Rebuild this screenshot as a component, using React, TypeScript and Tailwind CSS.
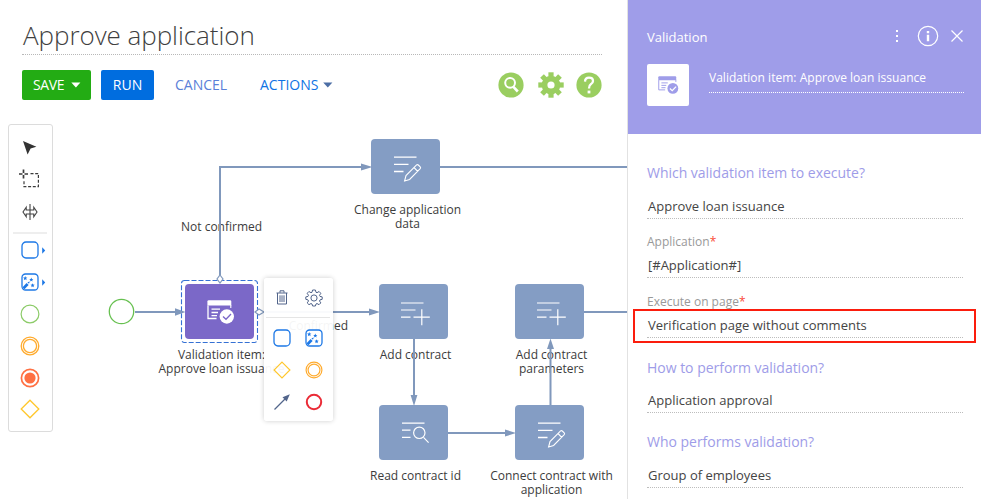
import type { ReactNode } from 'react';

const SANS = "font-['Open_Sans','Noto_Sans',sans-serif]";

function ValidationGlyph({ className }: { className: string }) {
  return (
    <svg className={className} viewBox="0 0 28 24" fill="none">
      <path d="M1 5.5V18.5H9.5" stroke="currentColor" strokeWidth="1.3" />
      <path d="M0.4 5.6V1.6Q.4 .2 1.8 .2H23Q24.3 .2 24.3 1.6V5.6Z" fill="currentColor" />
      <path d="M23.8 5V8" stroke="currentColor" strokeWidth="1.1" />
      <path d="M4.5 9.2H13M4.5 12.5H11M4.5 15.6H10" stroke="currentColor" strokeWidth="1.3" />
      <circle cx="19.8" cy="16.5" r="7.2" fill="currentColor" />
    </svg>
  );
}

function EditGlyph() {
  return (
    <svg width="28" height="26" viewBox="0 0 28 26" fill="none" stroke="#fff" strokeWidth="1.1">
      <path d="M0 1.2H22.5M0 8.4H14.5M0 15.5H9.5" strokeWidth="1.3" />
      <path d="M10.6 25L12 19.6L22.6 8.9Q23.4 8.2 24.3 9L26.2 10.9Q27 11.8 26.2 12.7L15.6 23.4L10.6 25ZM20 11.5L23.7 15.3" />
    </svg>
  );
}

function AddGlyph() {
  return (
    <svg width="29" height="24" viewBox="0 0 29 24" fill="none" stroke="#fff" strokeWidth="1.2">
      <path d="M0 1H22.5M0 8H14.5M0 15.2H9.5M12.5 15.2H28.8M20.8 7.2V23.3" />
    </svg>
  );
}

function ReadGlyph() {
  return (
    <svg width="28" height="22" viewBox="0 0 28 22" fill="none" stroke="#fff" strokeWidth="1.2">
      <path d="M0 1.2H22.5M0 8.2H8.5M0 15.3H8.5M21.5 15.4L26.6 20.6" />
      <circle cx="17.3" cy="10.8" r="5.7" />
    </svg>
  );
}

function TaskSquare() {
  return (
    <svg width="18" height="18" viewBox="0 0 18 18" fill="none" stroke="#1d78e6" strokeWidth="1.3">
      <rect x="1" y="1" width="16" height="16" rx="4" />
    </svg>
  );
}

function MagicSquare() {
  return (
    <svg width="18" height="18" viewBox="0 0 18 18" fill="#1d78e6">
      <rect x="1" y="1" width="16" height="16" rx="3.5" fill="none" stroke="#1d78e6" strokeWidth="1.3" />
      <path d="M1.8 14L5.6 9.9L7.6 11.9L3.7 16Q2 16.4 1.8 14Z" />
      <path d="M4.2 3L4.8 4.5L6.4 4.6L5.2 5.6L5.6 7.2L4.2 6.3L2.8 7.2L3.2 5.6L2 4.6L3.6 4.5Z" />
      <path d="M10.3 4.5L10.9 5.9L12.4 6L11.2 7L11.6 8.5L10.3 7.7L9 8.5L9.4 7L8.2 6L9.7 5.9Z" />
      <path d="M11.6 10.2L12.2 11.6L13.7 11.7L12.5 12.7L12.9 14.2L11.6 13.4L10.3 14.2L10.7 12.7L9.5 11.7L11 11.6Z" />
      <path d="M8.8 8.5L8 10.8L6.4 9.3Z" />
    </svg>
  );
}

function DoubleCircle({ size }: { size: number }) {
  return (
    <svg width={size} height={size} viewBox="0 0 20 20" fill="none" stroke="#ffab2e">
      <circle cx="10" cy="10" r="8.8" strokeWidth="1.3" />
      <circle cx="10" cy="10" r="6.6" strokeWidth="1.3" />
    </svg>
  );
}

function Diamond({ size }: { size: number }) {
  return (
    <svg width={size} height={size} viewBox="0 0 20 20" fill="none" stroke="#ffc72c" strokeWidth="1.3">
      <path d="M10 1.2L18.8 10L10 18.8L1.2 10Z" />
    </svg>
  );
}

function GearIcon() {
  const teeth = [0, 45, 90, 135, 180, 225, 270, 315];
  return (
    <svg width="26" height="26" viewBox="-13 -13 26 26" fill="#9ace60">
      {teeth.map((a) => (
        <rect key={a} x="-2.6" y="-12.7" width="5.2" height="7" transform={`rotate(${a})`} />
      ))}
      <path fillRule="evenodd" d="M-9.3 0A9.3 9.3 0 1 1 9.3 0A9.3 9.3 0 1 1 -9.3 0ZM-3.6 0A3.6 3.6 0 1 0 3.6 0A3.6 3.6 0 1 0 -3.6 0Z" />
    </svg>
  );
}

function Toolbar() {
  return (
    <div className="flex h-[30px] items-center text-[14px]">
      <button className="flex h-[30px] w-[69px] items-center rounded-[2px] bg-[#23ac14] pb-px pl-[11px] text-white">
        <span className="w-[38px] pb-px text-left tracking-[-0.35px]">SAVE</span>
        <svg width="10" height="6" viewBox="0 0 10 6" fill="#fff"><path d="M.3.5H9.4L4.9 5.4Z" /></svg>
      </button>
      <button className="ml-[10px] h-[30px] w-[53px] rounded-[2px] bg-[#006ddf] pb-[2px] text-white">RUN</button>
      <span className="ml-[21px] w-[85px] pb-[2px] text-[#5a80d8]">CANCEL</span>
      <span className="w-[63px] pb-[2px] text-[#0f73e4]">ACTIONS</span>
      <svg width="10" height="6" viewBox="0 0 10 6" fill="#4c6ea5"><path d="M.2.5H9.4L4.8 5.5Z" /></svg>
      <div className="ml-auto flex items-center pb-px">
        <svg width="26" height="26" viewBox="-13 -13 26 26">
          <circle r="12.6" fill="#9ace60" />
          <circle cx="-.9" cy="-2.2" r="4.9" fill="none" stroke="#fff" strokeWidth="2" />
          <path d="M2.4 1.8L6.8 6.5" stroke="#fff" strokeWidth="2.6" />
        </svg>
        <div className="mr-3 ml-[14px]"><GearIcon /></div>
        <svg width="26" height="26" viewBox="-13 -13 26 26" fill="none">
          <circle r="12.6" fill="#9ace60" />
          <path d="M-4 -3.4Q-3.8 -7.3 0 -7.3Q4 -7.3 4 -4Q4 -2 1.8 -.7Q0 .4 0 3.6" stroke="#fff" strokeWidth="2.3" />
          <rect x="-1.4" y="5.6" width="2.8" height="2.8" fill="#fff" />
        </svg>
      </div>
    </div>
  );
}

function Flyout() {
  return <svg className="absolute top-[6px] left-[33px]" width="4" height="7" viewBox="0 0 4 7" fill="#1d78e6"><path d="M.2.2L3.2 3.5L.2 6.8Z" /></svg>;
}

function Palette() {
  return (
    <div className="relative mt-[14px] ml-2 flex h-[308px] w-[45px] flex-col items-center rounded-[3px] border border-[#dcdcdc] bg-white pr-px">
      <svg className="mt-[15px] shrink-0" width="16" height="16" viewBox="0 0 16 16" fill="#333"><path d="M1 1L14.4 6.8L8.6 8.5L5.6 14.6Z" /></svg>
      <svg className="mt-[13px] mr-[2px] shrink-0" width="22" height="20" viewBox="0 0 22 20" fill="none" stroke="#3b3b3b">
        <path d="M5.5 .5V4M5.5 6V9.5M1 5H4.5M6.5 5H10" strokeWidth="1.7" />
        <path d="M12.5 4.6H20.4V17.6H6V11" strokeWidth="1.2" strokeDasharray="3 1.7" />
      </svg>
      <svg className="mt-[14px] shrink-0" width="16" height="18" viewBox="0 0 16 18" fill="none" stroke="#444" strokeWidth="1.1">
        <path d="M8 1V17M4.2 7H11.8V4.3L15 9L11.8 13.7V11H4.2V13.7L1 9L4.2 4.3Z" />
      </svg>
      <div className="mt-[11px] h-[2px] w-[34px] shrink-0 bg-[#eee]" />
      <div className="relative mt-[7px] flex h-[18px] w-full shrink-0 justify-center"><TaskSquare /><Flyout /></div>
      <div className="relative mt-[14px] flex h-[18px] w-full shrink-0 justify-center"><MagicSquare /><Flyout /></div>
      <svg className="mt-[13px] shrink-0" width="20" height="20" viewBox="0 0 20 20" fill="none" stroke="#8ccb68" strokeWidth="1.2"><circle cx="10" cy="10" r="8.9" /></svg>
      <div className="mt-[12px] shrink-0"><DoubleCircle size={20} /></div>
      <svg className="mt-[12px] shrink-0" width="20" height="20" viewBox="0 0 20 20" fill="#ff7043"><circle cx="10" cy="10" r="8.6" fill="none" stroke="#ff7043" strokeWidth="1.7" /><circle cx="10" cy="10" r="5.6" /></svg>
      <div className="mt-[11px] shrink-0"><Diamond size={20} /></div>
    </div>
  );
}

type NodeProps = { place: string; label: ReactNode; children: ReactNode; tone?: string };

function DiagramNode({ place, label, children, tone = 'bg-[#849dc4]' }: NodeProps) {
  return (
    <div className={`absolute flex w-[161px] flex-col items-center ${place}`}>
      <div className={`flex h-[55px] w-[69px] items-center justify-center rounded-[4px] ${tone}`}>{children}</div>
      <div className="mt-[9px] pl-1 text-center text-[12px] leading-[14.4px] whitespace-nowrap text-[#3c3c3c]">{label}</div>
    </div>
  );
}

function Canvas() {
  return (
    <div className="absolute inset-0 overflow-hidden">
      <DiagramNode place="left-[325px] top-[29px]" label={<>Change application<br />data</>}><div className="pt-1 pl-1"><EditGlyph /></div></DiagramNode>
      <DiagramNode place="left-[139px] top-[174px]" tone="bg-[#7b68c8]" label={<>Validation item:<br />Approve loan issuance</>}>
        <div className="relative pl-[3px]">
          <ValidationGlyph className="h-6 w-7 text-white" />
          <svg className="absolute top-[12px] left-[18px]" width="10" height="9" viewBox="0 0 10 9" fill="none" stroke="#7b68c8" strokeWidth="1.3"><path d="M1 4.5L4 7.3L9 2" /></svg>
        </div>
      </DiagramNode>
      <DiagramNode place="left-[333px] top-[174px]" label="Add contract"><div className="pt-1 pl-1"><AddGlyph /></div></DiagramNode>
      <DiagramNode place="left-[469px] top-[174px]" label={<>Add contract<br />parameters</>}><div className="pt-1 pl-1"><AddGlyph /></div></DiagramNode>
      <DiagramNode place="left-[333px] top-[295px]" label="Read contract id"><div className="pl-1"><ReadGlyph /></div></DiagramNode>
      <DiagramNode place="left-[469px] top-[295px]" label={<>Connect contract with<br />application</>}><div className="pt-1 pl-1"><EditGlyph /></div></DiagramNode>
      <span className="absolute top-[109px] left-[181px] text-[12px] leading-[16px] whitespace-nowrap text-[#3c3c3c]">Not confirmed</span>
      <span className="absolute top-[208px] right-[279px] text-[12px] leading-[16px] whitespace-nowrap text-[#3c3c3c]">Confirmed</span>
      <svg className="absolute inset-0" width="627" height="389" viewBox="0 110 627 389" fill="none">
        <circle cx="121.5" cy="311.5" r="12.2" stroke="#67c050" strokeWidth="1.3" />
        <rect x="181.5" y="280.5" width="76" height="62" rx="3" stroke="#3571d4" strokeDasharray="5 2" strokeWidth="1.1" />
        <g stroke="#8098bc" strokeWidth="2">
          <path d="M135 312H176M220 275V167H362M440 167H627M264 312H370M584 312H627M414 339V396M448 433H507M550.5 405V348" />
        </g>
        <g fill="#8098bc">
          <path d="M175 308.3L185.5 312L175 315.7ZM361 163.5L372.5 167L361 170.5ZM369 308.5L380 312L369 315.5ZM410.6 395L414 406L417.4 395ZM505 429.5L516 433L505 436.5ZM547 349L550.5 338.5L554 349Z" />
        </g>
        <g fill="#fff" stroke="#8098bc" strokeWidth="1.2">
          <path d="M220 275L223 279L220 283L217 279ZM255 312L259 309L264 312L259 315Z" />
        </g>
      </svg>
      <div className="absolute top-[168px] left-[264px] h-[143px] w-[69px] rounded-[3px] bg-white/95 shadow-[0_0_5px_rgba(0,0,0,0.2)]">
        <div className="mr-[3px] ml-[2px] grid h-[40px] grid-cols-2 place-items-center border-b border-[#e5e5e5]">
          <svg width="12" height="15" viewBox="0 0 12 15" fill="none" stroke="#52658b" strokeWidth="1"><path d="M.5 3H11.5M4 2.7V.8H8V2.7M1.5 3V14H10.5V3M4 5.3V12M6 5.3V12M8 5.3V12" /></svg>
          <svg width="18" height="18" viewBox="-9 -9 18 18" fill="none" stroke="#52658b" strokeWidth="1">
            <path d="M-1.4 -8H1.4L2 -5.7L3 -5.3L5.1 -6.5L6.8 -4.7L5.5 -2.7L6 -1.6L8.2 -1.1V1.3L6 1.9L5.5 3L6.8 4.9L5 6.7L3 5.5L2 6L1.4 8H-1.4L-2 6L-3 5.5L-5 6.7L-6.8 4.9L-5.5 3L-6 1.9L-8.2 1.3V-1.1L-6 -1.6L-5.5 -2.7L-6.8 -4.7L-5.1 -6.5L-3 -5.3L-2 -5.7Z" /><circle r="3.1" />
          </svg>
        </div>
        <div className="mr-[3px] ml-[2px] mt-[4px] grid h-[96px] grid-cols-2 grid-rows-3 place-items-center">
          <TaskSquare />
          <MagicSquare />
          <Diamond size={18} />
          <DoubleCircle size={18} />
          <svg width="18" height="18" viewBox="0 0 18 18"><path d="M1.5 16.5L12 6" stroke="#52658b" strokeWidth="1.2" /><path d="M16.8 1.2L13.7 8.5L9.5 4.3Z" fill="#52658b" /></svg>
          <svg width="18" height="18" viewBox="0 0 18 18" fill="none" stroke="#ea2b36" strokeWidth="2"><circle cx="9" cy="9" r="7.2" /></svg>
        </div>
      </div>
    </div>
  );
}

function Heading({ children }: { children: ReactNode }) {
  return <h3 className="h-[20px] text-[14px] leading-[20px] tracking-[-0.02px] whitespace-nowrap text-[#9e9ce8]">{children}</h3>;
}

function Value({ children }: { children: ReactNode }) {
  return (
    <div className="h-[22px] border-b border-dotted border-[#bdbdbd] pl-px text-[13px] leading-[18px] whitespace-nowrap text-[#444]">{children}</div>
  );
}

function Label({ children }: { children: ReactNode }) {
  return <div className="h-4 text-[12px] leading-4 whitespace-nowrap text-[#999]">{children}<span className="text-[#fa4b37]">*</span></div>;
}

function Panel() {
  return (
    <aside className="relative h-full w-[354px] shrink-0 border-l border-[#e2e2e2] bg-white">
      <header className="h-[134px] bg-[#9f9de9] pt-[24px] pr-[17px] pl-[19px] text-white">
        <div className="flex h-[24px] items-center">
          <span className="pt-[3px] text-[13px]">Validation</span>
          <svg className="ml-auto" width="4" height="14" viewBox="0 0 4 14" fill="#fff"><rect x="1" y="1" width="2" height="2" /><rect x="1" y="6" width="2" height="2" /><rect x="1" y="11" width="2" height="2" /></svg>
          <svg className="ml-[18px]" width="22" height="22" viewBox="0 0 22 22" fill="none" stroke="#fff"><circle cx="11" cy="11" r="9.7" strokeWidth="1.2" /><path d="M11 6V8.3M11 9.8V16.3" strokeWidth="2.4" /></svg>
          <svg className="ml-[11px]" width="14" height="14" viewBox="0 0 14 14" stroke="#fff" strokeWidth="1.2"><path d="M1.5 1.5L12.5 12.5M12.5 1.5L1.5 12.5" /></svg>
        </div>
        <div className="mt-[16px] flex">
          <div className="relative flex h-[42px] w-[42px] items-center justify-center rounded-[2px] bg-white">
            <ValidationGlyph className="h-[18px] w-[21px] text-[#9f9de9]" />
            <svg className="absolute top-[21px] left-[22px]" width="8" height="7" viewBox="0 0 10 9" fill="none" stroke="#fff" strokeWidth="1.6"><path d="M1 4.5L4 7.3L9 2" /></svg>
          </div>
          <div className="ml-[20px] h-[29px] w-[255px] border-b border-dotted border-white pt-[5px] text-[12px] leading-[17px] tracking-[0.02px] whitespace-nowrap">
            Validation item: Approve loan issuance
          </div>
        </div>
      </header>
      <div className="w-[335px] pt-[29px] pl-[19px]">
        <Heading>Which validation item to execute?</Heading>
        <div className="mt-[14px]"><Value>Approve loan issuance</Value></div>
        <div className="mt-[15px]"><Label>Application</Label></div>
        <div className="mt-[6px]"><Value>[#Application#]</Value></div>
        <div className="mt-[16px]"><Label>Execute on page</Label></div>
        <div className="mt-[6px]"><Value>Verification page without comments</Value></div>
        <div className="mt-[20px]"><Heading>How to perform validation?</Heading></div>
        <div className="mt-[13px]"><Value>Application approval</Value></div>
        <div className="mt-[19px]"><Heading>Who performs validation?</Heading></div>
        <div className="mt-[14px]"><Value>Group of employees</Value></div>
      </div>
      <div className="absolute top-[309px] left-[5px] h-[34px] w-[343px] border-2 border-[#fb1d0d]" />
    </aside>
  );
}

export default function App() {
  return (
    <div className={`flex h-[499px] w-[981px] overflow-hidden bg-white ${SANS}`}>
      <main className="flex min-w-0 flex-1 flex-col">
        <div className="h-[110px] pt-[17px] pr-[25px] pl-[22px]">
          <h1 className="h-[38px] border-b border-dotted border-[#b8b8b8] pl-px text-[26px] leading-[36px] font-light tracking-[-0.05px] whitespace-nowrap text-[#3f3f3f]">Approve application</h1>
          <div className="mt-[15px]"><Toolbar /></div>
        </div>
        <div className="relative flex-1">
          <Canvas />
          <Palette />
        </div>
      </main>
      <Panel />
    </div>
  );
}
